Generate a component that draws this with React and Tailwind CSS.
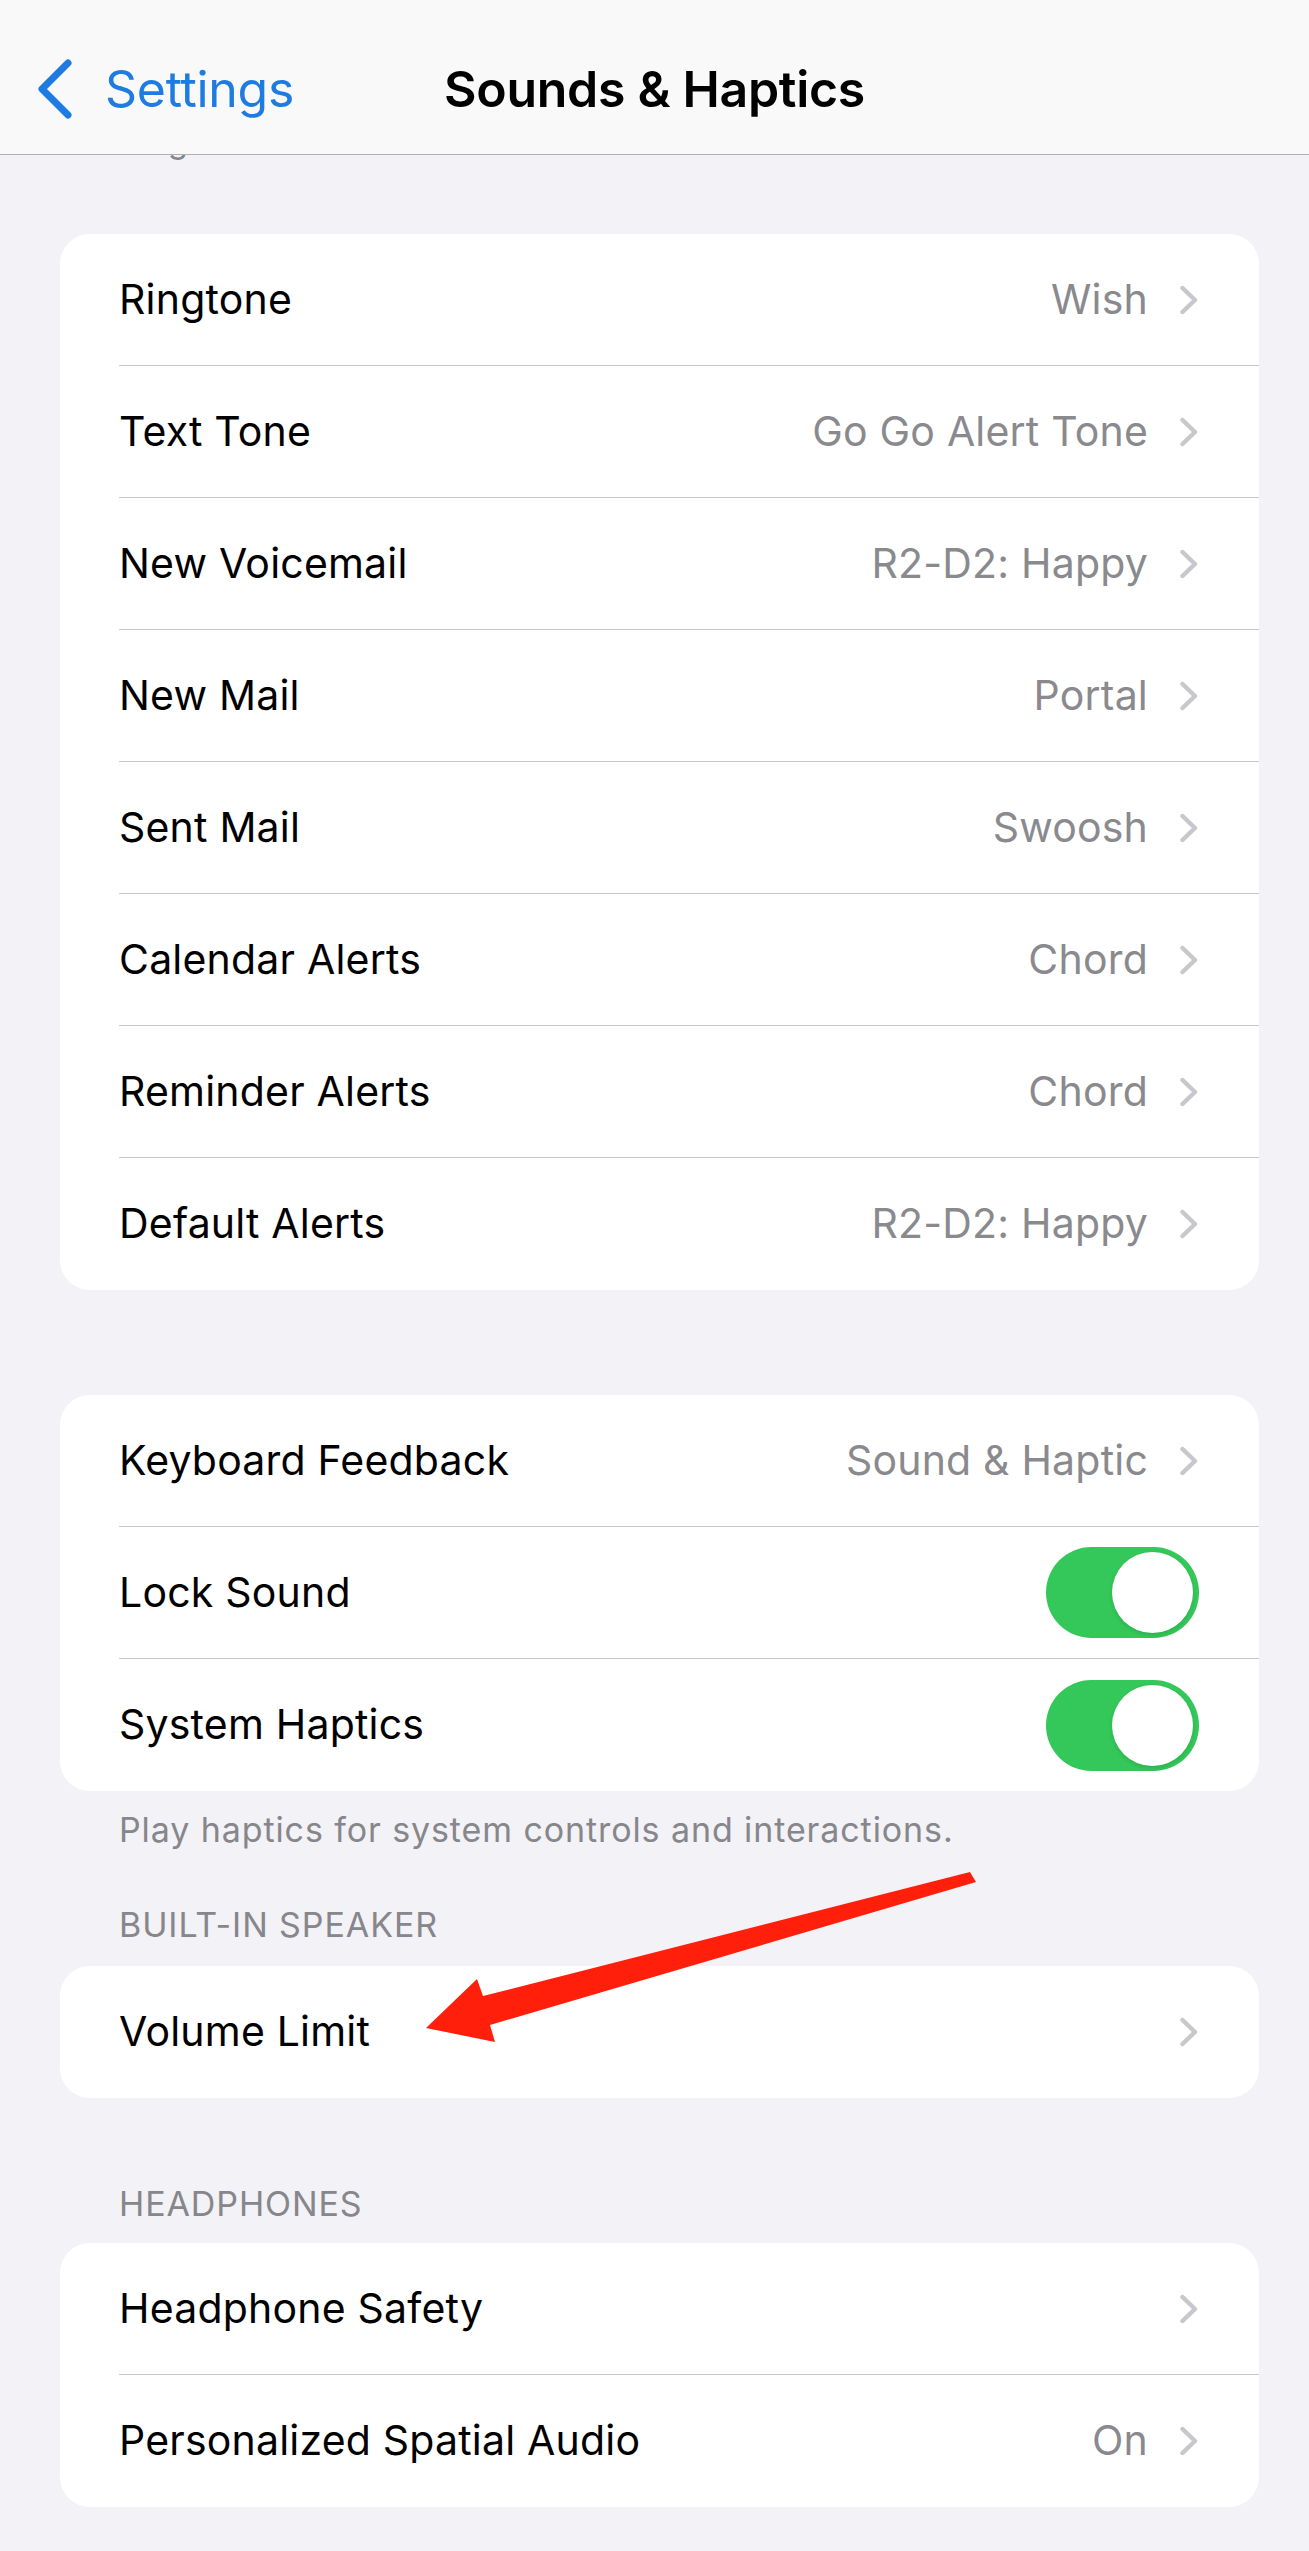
import React from 'react';

const Chevron = () => (
  <svg width="20" height="30" viewBox="0 0 20 30" className="shrink-0">
    <path d="M3.5 3 L16 15 L3.5 27" fill="none" stroke="#c7c7cc" strokeWidth="4.4" strokeLinecap="round" strokeLinejoin="round" />
  </svg>
);

const Toggle = () => (
  <div className="w-[153px] h-[91px] rounded-full bg-[#34c759] flex items-center justify-end pr-[6px] shrink-0">
    <div className="w-[81px] h-[81px] rounded-full bg-white shadow-[0_2px_4px_rgba(0,0,0,0.12)]"></div>
  </div>
);

const Row = ({ label, value, chevron = true, toggle = false, last = false }) => (
  <div className="pl-[59px]">
    <div className={`h-[132px] flex items-center pr-[60px] ${last ? '' : 'border-b border-[#c8c8cc]'}`}>
      <span className="text-[41px] text-black tracking-[0.2px]">{label}</span>
      <div className="ml-auto flex items-center gap-[31px]">
        {value && <span className="text-[41px] text-[#8a8a8e] tracking-[0.2px]">{value}</span>}
        {toggle ? <Toggle /> : chevron && <Chevron />}
      </div>
    </div>
  </div>
);

const Card = ({ children }) => (
  <div className="ml-[60px] mr-[50px] bg-white rounded-[30px] overflow-hidden">{children}</div>
);

const Caption = ({ className = '', children }) => (
  <p className={`px-[119px] text-[34px] leading-[40px] tracking-[0.9px] text-[#86868b] ${className}`}>{children}</p>
);

export default function App() {
  const tones = [
    ['Ringtone', 'Wish'],
    ['Text Tone', 'Go Go Alert Tone'],
    ['New Voicemail', 'R2-D2: Happy'],
    ['New Mail', 'Portal'],
    ['Sent Mail', 'Swoosh'],
    ['Calendar Alerts', 'Chord'],
    ['Reminder Alerts', 'Chord'],
    ['Default Alerts', 'R2-D2: Happy'],
  ];

  return (
    <div className="relative min-h-screen bg-[#f2f2f7] font-['Inter','Liberation_Sans',sans-serif] pb-[44px]">
      {/* Nav bar */}
      <header className="h-[155px] bg-[#f9f9f9] border-b border-[#b0b0b2] pt-[24px] grid grid-cols-[1fr_auto_1fr] items-center">
        <div className="flex items-center pl-[36px] gap-[31px]">
          <svg width="38" height="62" viewBox="0 0 38 62">
            <path d="M32 5 L6 31 L32 57" fill="none" stroke="#1d7be2" strokeWidth="7" strokeLinecap="round" strokeLinejoin="round" />
          </svg>
          <span className="text-[50px] text-[#1d7be2] tracking-[-0.3px]">Settings</span>
        </div>
        <h1 className="text-[50px] font-semibold text-black tracking-[-0.3px]">Sounds &amp; Haptics</h1>
        <div></div>
      </header>

      {/* scrolled-away footer, only the descender shows */}
      <div className="h-[7px] overflow-hidden pl-[119px]">
        <p className="text-[33px] leading-[33px] text-[#86868b] mt-[-30px]">Ring</p>
      </div>

      <div className="mt-[72px]">
        <Card>
          {tones.map(([l, v], i) => (
            <Row key={l} label={l} value={v} last={i === tones.length - 1} />
          ))}
        </Card>
      </div>

      <div className="mt-[105px]">
        <Card>
          <Row label="Keyboard Feedback" value="Sound & Haptic" />
          <Row label="Lock Sound" toggle />
          <Row label="System Haptics" toggle last />
        </Card>
      </div>

      <Caption className="mt-[19px]">Play haptics for system controls and interactions.</Caption>

      <Caption className="mt-[55px]">BUILT-IN SPEAKER</Caption>
      <div className="mt-[21px]">
        <Card>
          <Row label="Volume Limit" last />
        </Card>
      </div>

      <Caption className="mt-[86px]">HEADPHONES</Caption>
      <div className="mt-[19px]">
        <Card>
          <Row label="Headphone Safety" />
          <Row label="Personalized Spatial Audio" value="On" last />
        </Card>
      </div>

      {/* red annotation arrow */}
      <svg className="absolute top-0 left-0 pointer-events-none" width="1309" height="2551" viewBox="0 0 1309 2551">
        <polygon
          points="426,2028 477,1979 483,1996 970,1872 976,1882 490,2025 495,2042"
          fill="#ff1f0a"
        />
      </svg>
    </div>
  );
}
